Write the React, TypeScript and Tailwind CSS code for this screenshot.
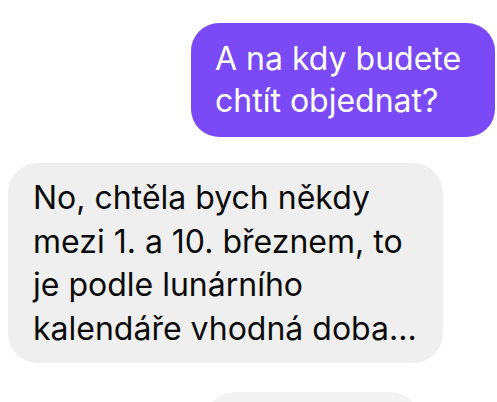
export default function App() {
  return (
    <div className="h-[402px] w-[497px] overflow-hidden bg-white font-['Inter',sans-serif]">
      <div className="flex flex-col pt-[23px]">
        <div className="flex justify-end pr-[2px]">
          <div className="w-[304px] rounded-[28px] bg-[#7a4af6] px-[24px] py-[15px] text-[32px] leading-[42px] text-white">
            A na kdy budete
            <br />
            chtít objednat?
          </div>
        </div>
        <div className="mt-[26px] flex pl-[8px]">
          <div className="w-[435px] rounded-[30px] bg-[#efefef] px-[25px] py-[13px] text-[32px] leading-[43.5px] text-[#0b0b0b]">
            No, chtěla bych někdy
            <br />
            mezi 1. a 10. březnem, to
            <br />
            je podle lunárního
            <br />
            kalendáře vhodná doba...
          </div>
        </div>
        <div className="mt-[29px] flex pl-[205px]">
          <div className="h-[60px] w-[215px] rounded-[30px] bg-[#f3f3f3]" />
        </div>
      </div>
    </div>
  );
}
